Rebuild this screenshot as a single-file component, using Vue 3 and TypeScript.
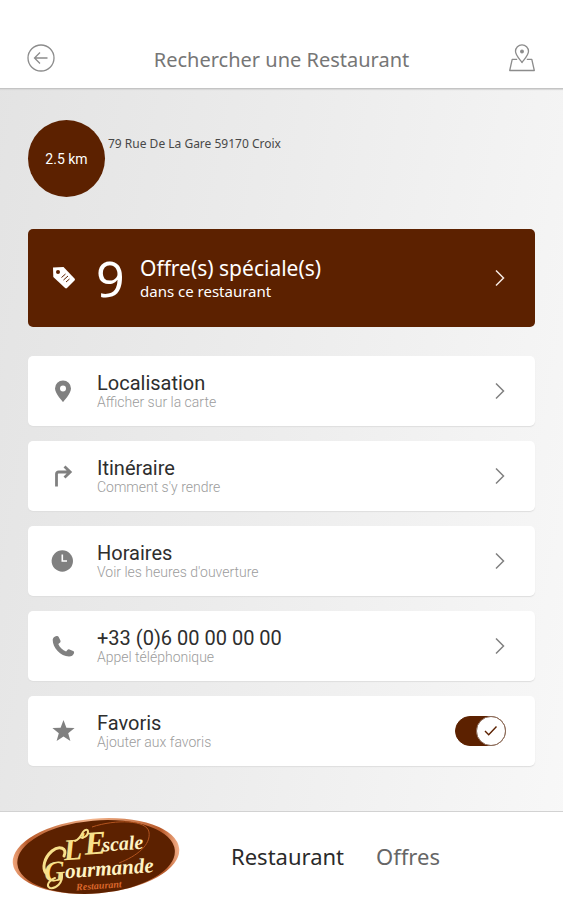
<script setup lang="ts">
import { ref } from 'vue'

type IconName = 'pin' | 'route' | 'clock' | 'phone'

interface Entry {
  icon: IconName
  title: string
  hint: string
  href: string
}

const entries: Entry[] = [
  { icon: 'pin', title: 'Localisation', hint: 'Afficher sur la carte', href: '#localisation' },
  { icon: 'route', title: 'Itinéraire', hint: "Comment s'y rendre", href: '#itineraire' },
  { icon: 'clock', title: 'Horaires', hint: "Voir les heures d'ouverture", href: '#horaires' },
  { icon: 'phone', title: '+33 (0)6 00 00 00 00', hint: 'Appel téléphonique', href: 'tel:+33600000000' },
]

const favorite = ref<boolean>(true)
const offerCount = ref<number>(9)
</script>

<template>
  <div class="page">
    <header class="topbar">
      <button class="icon-button" type="button" aria-label="Retour">
        <svg width="28" height="28" viewBox="0 0 28 28" fill="none" stroke="#8c8c8c" stroke-width="1.3">
          <circle cx="14" cy="14" r="13" />
          <path d="M20.5 14H7.5M13 8.5L7.500 14l5.500 5.500" />
        </svg>
      </button>
      <h1 class="heading">Rechercher une Restaurant</h1>
      <button class="icon-button" type="button" aria-label="Carte">
        <svg width="28" height="28" viewBox="0 0 28 28" fill="none" stroke="#8c8c8c" stroke-width="1.3" stroke-linejoin="round">
          <path d="M14 18.500C11 14.500 7.500 11 7.500 7.300a6.500 6.500 0 0 1 13 0C20.500 11 17 14.500 14 18.500z" />
          <circle cx="14" cy="7.500" r="1.300" fill="#8c8c8c" />
          <path d="M9.200 15.300H4.200L1.700 26.500h24.600L23.800 15.300h-5" />
        </svg>
      </button>
    </header>

    <main class="content">
      <section class="place">
        <span class="distance">2.5 km</span>
        <address class="address">79 Rue De La Gare 59170 Croix</address>
      </section>

      <a class="offer" href="#offres">
        <svg class="tag" width="24" height="24" viewBox="0 0 24 24">
          <path d="M1 1.500L11.500 1 22.500 12.500c.6.700.6 1.300 0 2L15 22c-.6.500-1.300.5-1.900 0L1.300 11z" fill="#fff" />
          <circle cx="6" cy="6" r="2" fill="#5c2100" />
          <path d="M9.500 11.500l4-3.500M11.500 14l4.500-4M14 16l3.500-3" stroke="#5c2100" stroke-width="1" />
        </svg>
        <strong class="count">{{ offerCount }}</strong>
        <span class="offer-text">
          <span class="offer-title">Offre(s) spéciale(s)</span>
          <span class="offer-hint">dans ce restaurant</span>
        </span>
        <svg class="chevron" width="12" height="18" viewBox="0 0 12 18" fill="none" stroke="#f6e9e2" stroke-width="1.5">
          <path d="M2 1.500l7.500 7.500L2 16.500" />
        </svg>
      </a>

      <ul class="entries">
        <li v-for="entry in entries" :key="entry.title">
          <a class="card" :href="entry.href">
            <svg class="glyph" width="24" height="24" viewBox="0 0 24 24" fill="#808080">
              <path
                v-if="entry.icon === 'pin'"
                fill-rule="evenodd"
                d="M12 1.500a8 8 0 0 0-8 8C4 14.500 12 23 12 23s8-8.500 8-13.500a8 8 0 0 0-8-8zm0 5a3 3 0 1 1 0 6 3 3 0 0 1 0-6z"
              />
              <path
                v-else-if="entry.icon === 'route'"
                d="M5.500 22.500V10a2 2 0 0 1 2-2H19M13.500 2.500L19.200 8l-5.700 5.500"
                fill="none"
                stroke="#808080"
                stroke-width="2.800"
              />
              <template v-else-if="entry.icon === 'clock'">
                <circle cx="11.300" cy="12" r="10.700" />
                <path d="M11.300 5.500V12h4.700" fill="none" stroke="#fff" stroke-width="1.600" />
              </template>
              <path
                v-else
                d="M5.500 2C3.500 2.500 1.800 3.700 1.700 5.800 1.600 14 9.500 22.300 18 22.500c2.500 0 4.300-1.300 5-3.300.3-1-.1-1.700-.9-2.100l-3.600-1.700c-.8-.4-1.600-.2-2.100.5l-1.300 1.700C11.700 16.300 8.700 13.300 7.300 10l1.600-1.300c.7-.6.8-1.300.5-2.100L7.700 2.900C7.200 2 6.400 1.700 5.500 2z"
              />
            </svg>
            <span class="card-text">
              <span class="card-title">{{ entry.title }}</span>
              <span class="card-hint">{{ entry.hint }}</span>
            </span>
            <svg class="chevron" width="12" height="18" viewBox="0 0 12 18" fill="none" stroke="#808080" stroke-width="1.5">
              <path d="M2 1.500l7.500 7.500L2 16.500" />
            </svg>
          </a>
        </li>
        <li>
          <label class="card" for="favorite">
            <svg class="glyph" width="24" height="24" viewBox="0 0 24 24" fill="#808080">
              <path d="M12.500 1l2.900 7.700 8.200.4-6.400 5.100 2.200 7.900-6.900-4.500-6.900 4.500 2.200-7.900L1.400 9.100l8.200-.4z" />
            </svg>
            <span class="card-text">
              <span class="card-title">Favoris</span>
              <span class="card-hint">Ajouter aux favoris</span>
            </span>
            <span class="switch">
              <input id="favorite" v-model="favorite" class="switch-input" type="checkbox" role="switch" />
              <span class="knob">
                <svg width="14" height="12" viewBox="0 0 14 12" fill="none" stroke="#5c2100" stroke-width="1.400">
                  <path d="M1 6l3.700 3.700L12.500 1.500" />
                </svg>
              </span>
            </span>
          </label>
        </li>
      </ul>
    </main>

    <footer class="bottombar">
      <a class="logo" href="#accueil" aria-label="L'Escale Gourmande Restaurant">
        <svg width="168" height="80" viewBox="0 0 168 80">
          <defs>
            <linearGradient id="rim" x1="0" y1="0" x2="1" y2="0">
              <stop offset="0" stop-color="#f0a67c" />
              <stop offset="0.1" stop-color="#b85a2a" />
              <stop offset="0.5" stop-color="#f3b48c" />
              <stop offset="0.9" stop-color="#b85a2a" />
              <stop offset="1" stop-color="#f5b08a" />
            </linearGradient>
          </defs>
          <g transform="rotate(-5 84 40)">
            <ellipse cx="84" cy="40" rx="83.500" ry="37.500" fill="url(#rim)" />
            <ellipse cx="84" cy="41" rx="79" ry="36.500" fill="#5c2100" />
          </g>
          <path d="M80 11C104 3 135 4 137 16c2 13-12 24-30 31" fill="none" stroke="#b3541f" stroke-width="1" />
          <g fill="none" stroke="#f7e08b" stroke-linecap="round">
            <path d="M63 25c3-1 6-5 8-9 2-3 5-3 5 0 0 4-5 7-8 5" stroke-width="2" />
            <path d="M52 40c4-8-5-11-12-5-8 7-10 17-6 22" stroke-width="3" />
            <path d="M50 58c1 9-6 15-12 14-4-2-2-7 5-10" stroke-width="2" />
          </g>
          <g class="logo-script" transform="rotate(-4 84 40)">
            <text x="52" y="42" font-size="30">L</text>
            <text x="68" y="32" font-size="24">'</text>
            <text x="73" y="38" font-size="33">E</text>
            <text class="logo-light" x="91" y="36" font-size="20">scale</text>
            <text x="31" y="62" font-size="29">G</text>
            <text class="logo-light" x="52" y="60" font-size="21">ourmande</text>
            <text class="logo-small" x="62" y="73" font-size="10">Restaurant</text>
          </g>
        </svg>
      </a>
      <nav class="tabs">
        <a class="tab active" href="#restaurant" aria-current="page">Restaurant</a>
        <a class="tab" href="#offres">Offres</a>
      </nav>
    </footer>
  </div>
</template>

<style>
body {
  margin: 0;
}
</style>

<style scoped>
.page {
  display: flex;
  flex-direction: column;
  min-height: 100vh;
  font-family: 'Noto Sans', 'Open Sans', sans-serif;
  background: linear-gradient(100deg, #e3e3e3 0%, #ececec 45%, #f8f8f8 100%);
}

a {
  color: inherit;
  text-decoration: none;
}

.topbar {
  display: flex;
  align-items: center;
  justify-content: space-between;
  box-sizing: border-box;
  height: 89px;
  padding: 27px 27px 0;
  background: #fff;
  border-bottom: 1px solid #c4c4c4;
  box-shadow: 0 1px 1px #d8d8d8;
}

.icon-button {
  display: flex;
  padding: 0;
  border: 0;
  background: none;
  cursor: pointer;
}

.heading {
  margin: 4px 0 0;
  font-size: 20px;
  line-height: 28px;
  font-weight: 400;
  color: #767676;
}

.content {
  display: flex;
  flex: 1;
  flex-direction: column;
  padding: 31px 28px 44px;
}

.place {
  display: flex;
  gap: 3px;
}

.distance {
  display: flex;
  align-items: center;
  justify-content: center;
  width: 77px;
  height: 77px;
  border-radius: 50%;
  background: #5c2100;
  color: #fff;
  font-family: Roboto, sans-serif;
  font-size: 14px;
}

.address {
  padding-top: 15px;
  font-size: 12px;
  line-height: 18px;
  font-style: normal;
  color: #484848;
}

.offer {
  display: flex;
  align-items: center;
  box-sizing: border-box;
  height: 98px;
  margin-top: 32px;
  padding: 0 29px 0 24px;
  border-radius: 5px;
  background: #5c2100;
  color: #fff;
}

.count {
  width: 44px;
  margin-left: 20px;
  font-size: 50px;
  line-height: 56px;
  font-weight: 400;
}

.offer-text,
.card-text {
  display: flex;
  flex: 1;
  flex-direction: column;
}

.offer-title {
  font-size: 21px;
  line-height: 25px;
}

.offer-hint {
  font-size: 15px;
  line-height: 20px;
}

.entries {
  display: grid;
  gap: 15px;
  margin: 29px 0 0;
  padding: 0;
  list-style: none;
}

.card {
  display: flex;
  align-items: center;
  box-sizing: border-box;
  height: 70px;
  padding: 0 29px 0 23px;
  border-radius: 5px;
  background: #fff;
  box-shadow: 0 1px 1px #dedede;
  font-family: Roboto, sans-serif;
  cursor: pointer;
}

.card-text {
  margin-left: 22px;
}

.card-title {
  font-size: 20px;
  line-height: 22px;
  color: #2e2e2e;
}

.card-hint {
  font-size: 14px;
  line-height: 16px;
  font-weight: 300;
  color: #9c9c9c;
}

.switch {
  display: grid;
  align-items: center;
}

.switch-input {
  grid-area: 1 / 1;
  width: 51px;
  height: 30px;
  margin: 0;
  appearance: none;
  border: 1px solid #5c2100;
  border-radius: 15px;
  background: #fff;
  cursor: pointer;
}

.switch-input:checked {
  background: #5c2100;
}

.knob {
  display: flex;
  grid-area: 1 / 1;
  align-items: center;
  justify-content: center;
  box-sizing: border-box;
  width: 30px;
  height: 30px;
  border: 1px solid #8a6a58;
  border-radius: 50%;
  background: #fff;
  pointer-events: none;
}

.switch-input:checked + .knob {
  justify-self: end;
}

.bottombar {
  display: flex;
  align-items: center;
  box-sizing: border-box;
  height: 89px;
  padding: 0 12px;
  border-top: 1px solid #d2d2d2;
  background: #fff;
}

.logo {
  display: flex;
}

.logo-script {
  fill: #f7e08b;
  font-family: 'Liberation Serif', serif;
  font-style: italic;
  font-weight: 700;
}

.logo-light {
  fill: #fff3c4;
}

.logo-small {
  fill: #d9662b;
}

.tabs {
  display: flex;
  gap: 32px;
  margin-left: 51px;
}

.tab {
  font-size: 22px;
  line-height: 30px;
  color: #666;
}

.tab.active {
  color: #2a2a2a;
}
</style>
